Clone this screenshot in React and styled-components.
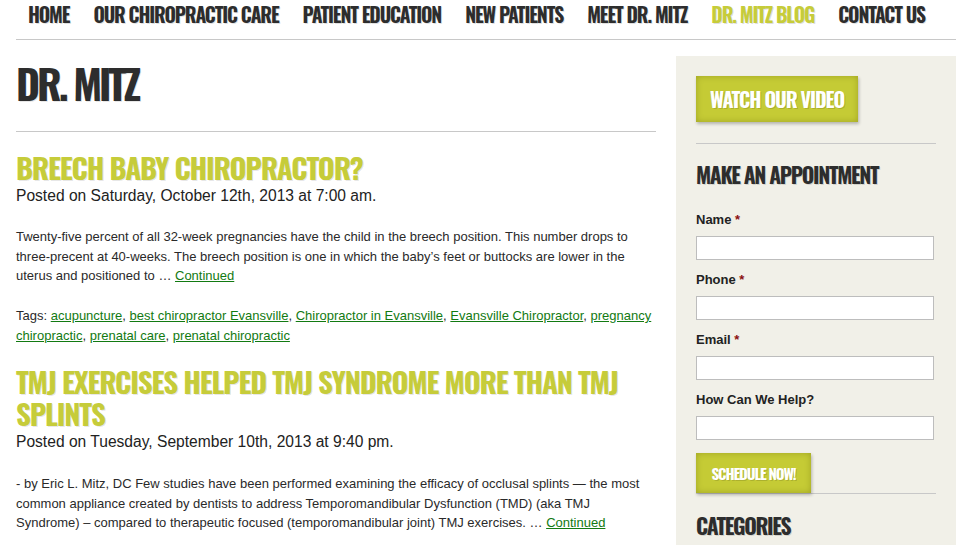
import React from "react";
import styled, { createGlobalStyle } from "styled-components";

const Global = createGlobalStyle`
  html, body { margin: 0; padding: 0; background: #fff; }
  body { font-family: "Liberation Sans", Arial, sans-serif; color: #222; }
  * { box-sizing: border-box; }
`;

const COND = `"Oswald", "Roboto Condensed", "Liberation Sans Narrow", "DejaVu Sans Condensed", sans-serif`;
const GREEN = "#c6cc3a";
const LINK = "#127a12";

const Page = styled.div`
  width: 940px;
  margin-left: 16px;
`;

const Nav = styled.nav`
  display: flex;
  align-items: center;
  height: 40px;
  border-bottom: 1px solid #c8c8c8;
  padding-bottom: 10px;
`;

const NavItem = styled.a`
  font-family: ${COND};
  font-weight: bold;
  font-size: 19.5px;
  letter-spacing: -1.1px;
  color: ${(p) => (p.$active ? GREEN : "#2d2d2d")};
  text-transform: uppercase;
  text-decoration: none;
  padding: 0 12px;
  text-shadow: 1px 1px 0 rgba(0, 0, 0, 0.12);
  white-space: nowrap;
`;

const Main = styled.div`
  display: flex;
  gap: 20px;
  align-items: flex-start;
`;

const Content = styled.main`
  width: 640px;
  flex: none;
`;

const PageTitle = styled.h1`
  font-family: ${COND};
  font-weight: bold;
  font-size: 41px;
  letter-spacing: -3px;
  line-height: 50px;
  color: #2d2d2d;
  margin: 18px 0 0;
  padding-bottom: 23px;
  border-bottom: 1px solid #c8c8c8;
  text-shadow: 1px 1px 0 rgba(0, 0, 0, 0.1);
`;

const Post = styled.article`
  padding-top: ${(p) => p.$top}px;
`;

const PostTitle = styled.h2`
  font-family: ${COND};
  font-weight: bold;
  font-size: 29px;
  letter-spacing: -1.2px;
  line-height: 32px;
  color: ${GREEN};
  margin: 0;
  text-transform: uppercase;
  text-shadow: 1px 1px 0 rgba(0, 0, 0, 0.1);
`;

const Meta = styled.p`
  font-size: 15.6px;
  line-height: 20px;
  color: #222;
  margin: 3px 0 0;
`;

const Body = styled.p`
  font-size: 13px;
  line-height: 19.5px;
  color: #2a2a2a;
  margin: ${(p) => p.$top || 21}px 0 0;
`;

const Link = styled.a`
  color: ${LINK};
  text-decoration: underline;
`;

const Sidebar = styled.aside`
  width: 280px;
  flex: none;
  margin-top: 16px;
  background: #f1f0e8;
  padding: 20px 20px 10px;
  height: 489px;
`;

const GreenButton = styled.button`
  display: block;
  font-family: ${COND};
  font-weight: bold;
  font-size: ${(p) => p.$size}px;
  letter-spacing: -1.1px;
  color: #fff;
  background: #c5cb35;
  border: none;
  height: ${(p) => p.$h}px;
  width: ${(p) => p.$w}px;
  padding: 0;
  text-transform: uppercase;
  box-shadow: inset 0 0 6px rgba(90, 90, 0, 0.35), 1px 2px 3px rgba(0, 0, 0, 0.25);
  text-shadow: 1px 1px 0 rgba(0, 0, 0, 0.15);
  cursor: pointer;
`;

const Rule = styled.hr`
  border: none;
  border-top: 1px solid #c8c8c8;
  margin: ${(p) => p.$top || 0}px 0 0;
  width: 240px;
`;

const WidgetTitle = styled.h3`
  font-family: ${COND};
  font-weight: bold;
  font-size: 21.5px;
  letter-spacing: -1.3px;
  line-height: 30px;
  color: #2d2d2d;
  margin: ${(p) => p.$top}px 0 0;
  text-transform: uppercase;
  text-shadow: 1px 1px 0 rgba(0, 0, 0, 0.12);
`;

const Form = styled.form`
  margin-top: 22px;
  display: flex;
  flex-direction: column;
`;

const Field = styled.div`
  display: flex;
  flex-direction: column;
  margin-bottom: 11px;
  &:nth-last-child(2) {
    margin-bottom: 13px;
  }
`;

const Label = styled.label`
  font-size: 13px;
  font-weight: bold;
  line-height: 17px;
  color: #222;
  margin-bottom: 8px;
`;

const Req = styled.span`
  color: #8b0f0f;
`;

const Input = styled.input`
  width: 238px;
  height: 24px;
  border: 1px solid #bdbdbd;
  background: #fff;
  padding: 2px 4px;
`;

const navItems = [
  "Home",
  "Our Chiropractic Care",
  "Patient Education",
  "New Patients",
  "Meet Dr. Mitz",
  "Dr. Mitz Blog",
  "Contact Us",
];

const tags = [
  "acupuncture",
  "best chiropractor Evansville",
  "Chiropractor in Evansville",
  "Evansville Chiropractor",
  "pregnancy chiropractic",
  "prenatal care",
  "prenatal chiropractic",
];

const fields = [
  { label: "Name", req: true },
  { label: "Phone", req: true },
  { label: "Email", req: true },
  { label: "How Can We Help?", req: false },
];

export default function App() {
  return (
    <>
      <Global />
      <Page>
        <Nav>
          {navItems.map((n) => (
            <NavItem key={n} href="#" $active={n === "Dr. Mitz Blog"}>
              {n}
            </NavItem>
          ))}
        </Nav>
        <Main>
          <Content>
            <PageTitle>DR. MITZ</PageTitle>
            <Post $top={19}>
              <PostTitle>Breech Baby Chiropractor?</PostTitle>
              <Meta>Posted on Saturday, October 12th, 2013 at 7:00 am.</Meta>
              <Body>
                Twenty-five percent of all 32-week pregnancies have the child in the breech
                position. This number drops to three-precent at 40-weeks. The breech position
                is one in which the baby’s feet or buttocks are lower in the uterus and
                positioned to … <Link href="#">Continued</Link>
              </Body>
              <Body $top={20.5}>
                Tags:{" "}
                {tags.map((t, i) => (
                  <React.Fragment key={t}>
                    <Link href="#">{t}</Link>
                    {i < tags.length - 1 ? ", " : ""}
                  </React.Fragment>
                ))}
              </Body>
            </Post>
            <Post $top={20}>
              <PostTitle>TMJ Exercises Helped TMJ Syndrome More Than TMJ Splints</PostTitle>
              <Meta>Posted on Tuesday, September 10th, 2013 at 9:40 pm.</Meta>
              <Body $top={22}>
                - by Eric L. Mitz, DC Few studies have been performed examining the efficacy
                of occlusal splints — the most common appliance created by dentists to address
                Temporomandibular Dysfunction (TMD) (aka TMJ Syndrome) – compared to
                therapeutic focused (temporomandibular joint) TMJ exercises. …{" "}
                <Link href="#">Continued</Link>
              </Body>
            </Post>
          </Content>
          <Sidebar>
            <GreenButton $w={162} $h={46} $size={20}>Watch Our Video</GreenButton>
            <Rule $top={21} />
            <WidgetTitle $top={15}>Make an Appointment</WidgetTitle>
            <Form>
              {fields.map((f) => (
                <Field key={f.label}>
                  <Label>
                    {f.label} {f.req && <Req>*</Req>}
                  </Label>
                  <Input type="text" />
                </Field>
              ))}
              <GreenButton type="button" $w={115} $h={40} $size={15}>
                Schedule Now!
              </GreenButton>
            </Form>
            <Rule />
            <WidgetTitle $top={16}>Categories</WidgetTitle>
          </Sidebar>
        </Main>
      </Page>
    </>
  );
}
